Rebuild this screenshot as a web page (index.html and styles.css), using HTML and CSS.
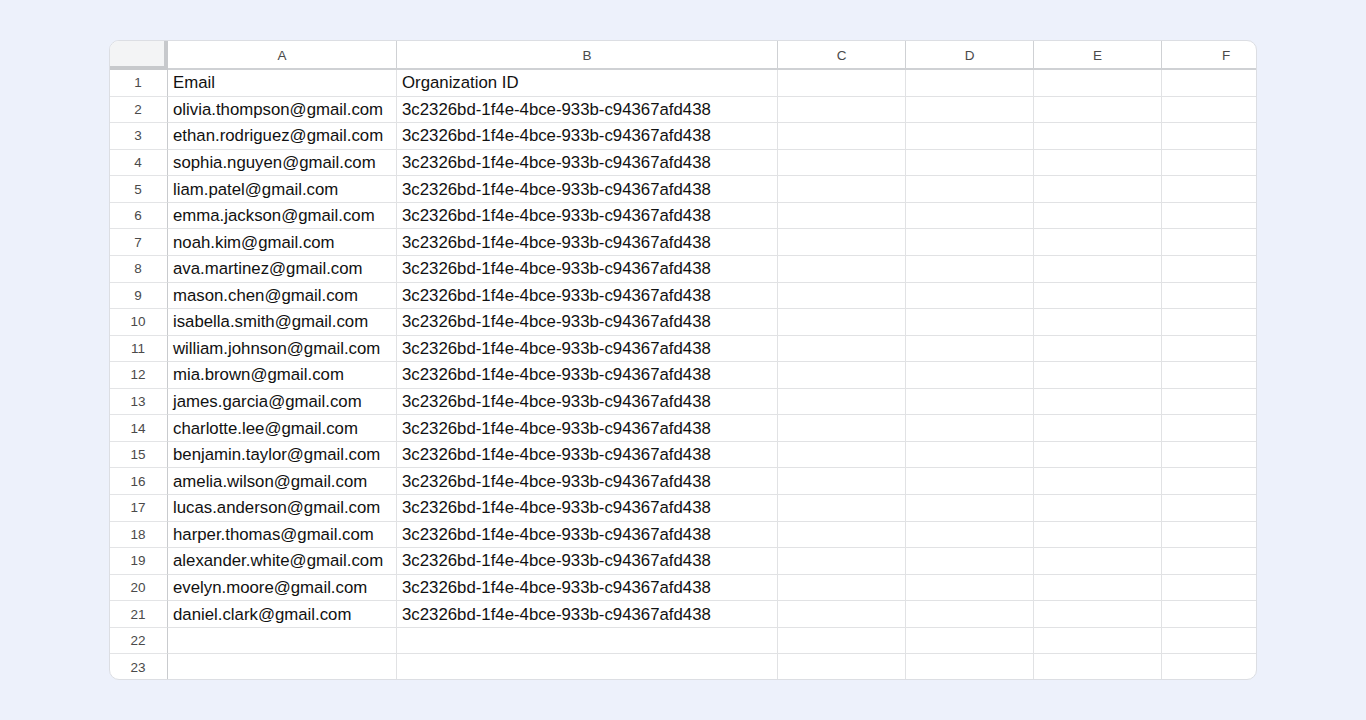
FILE: index.html
```html
<!DOCTYPE html>
<html lang="en">
<head>
<meta charset="utf-8">
<title>Sheet</title>
<link rel="stylesheet" href="styles.css">
</head>
<body>
<div class="page">
  <div class="sheet">
    <div class="corner"></div>
    <div class="ch">A</div><div class="ch">B</div><div class="ch">C</div><div class="ch">D</div><div class="ch">E</div><div class="ch last">F</div>

    <div class="rn">1</div><div class="c">Email</div><div class="c">Organization ID</div><div class="c"></div><div class="c"></div><div class="c"></div><div class="c last"></div>
    <div class="rn">2</div><div class="c">olivia.thompson@gmail.com</div><div class="c">3c2326bd-1f4e-4bce-933b-c94367afd438</div><div class="c"></div><div class="c"></div><div class="c"></div><div class="c last"></div>
    <div class="rn">3</div><div class="c">ethan.rodriguez@gmail.com</div><div class="c">3c2326bd-1f4e-4bce-933b-c94367afd438</div><div class="c"></div><div class="c"></div><div class="c"></div><div class="c last"></div>
    <div class="rn">4</div><div class="c">sophia.nguyen@gmail.com</div><div class="c">3c2326bd-1f4e-4bce-933b-c94367afd438</div><div class="c"></div><div class="c"></div><div class="c"></div><div class="c last"></div>
    <div class="rn">5</div><div class="c">liam.patel@gmail.com</div><div class="c">3c2326bd-1f4e-4bce-933b-c94367afd438</div><div class="c"></div><div class="c"></div><div class="c"></div><div class="c last"></div>
    <div class="rn">6</div><div class="c">emma.jackson@gmail.com</div><div class="c">3c2326bd-1f4e-4bce-933b-c94367afd438</div><div class="c"></div><div class="c"></div><div class="c"></div><div class="c last"></div>
    <div class="rn">7</div><div class="c">noah.kim@gmail.com</div><div class="c">3c2326bd-1f4e-4bce-933b-c94367afd438</div><div class="c"></div><div class="c"></div><div class="c"></div><div class="c last"></div>
    <div class="rn">8</div><div class="c">ava.martinez@gmail.com</div><div class="c">3c2326bd-1f4e-4bce-933b-c94367afd438</div><div class="c"></div><div class="c"></div><div class="c"></div><div class="c last"></div>
    <div class="rn">9</div><div class="c">mason.chen@gmail.com</div><div class="c">3c2326bd-1f4e-4bce-933b-c94367afd438</div><div class="c"></div><div class="c"></div><div class="c"></div><div class="c last"></div>
    <div class="rn">10</div><div class="c">isabella.smith@gmail.com</div><div class="c">3c2326bd-1f4e-4bce-933b-c94367afd438</div><div class="c"></div><div class="c"></div><div class="c"></div><div class="c last"></div>
    <div class="rn">11</div><div class="c">william.johnson@gmail.com</div><div class="c">3c2326bd-1f4e-4bce-933b-c94367afd438</div><div class="c"></div><div class="c"></div><div class="c"></div><div class="c last"></div>
    <div class="rn">12</div><div class="c">mia.brown@gmail.com</div><div class="c">3c2326bd-1f4e-4bce-933b-c94367afd438</div><div class="c"></div><div class="c"></div><div class="c"></div><div class="c last"></div>
    <div class="rn">13</div><div class="c">james.garcia@gmail.com</div><div class="c">3c2326bd-1f4e-4bce-933b-c94367afd438</div><div class="c"></div><div class="c"></div><div class="c"></div><div class="c last"></div>
    <div class="rn">14</div><div class="c">charlotte.lee@gmail.com</div><div class="c">3c2326bd-1f4e-4bce-933b-c94367afd438</div><div class="c"></div><div class="c"></div><div class="c"></div><div class="c last"></div>
    <div class="rn">15</div><div class="c">benjamin.taylor@gmail.com</div><div class="c">3c2326bd-1f4e-4bce-933b-c94367afd438</div><div class="c"></div><div class="c"></div><div class="c"></div><div class="c last"></div>
    <div class="rn">16</div><div class="c">amelia.wilson@gmail.com</div><div class="c">3c2326bd-1f4e-4bce-933b-c94367afd438</div><div class="c"></div><div class="c"></div><div class="c"></div><div class="c last"></div>
    <div class="rn">17</div><div class="c">lucas.anderson@gmail.com</div><div class="c">3c2326bd-1f4e-4bce-933b-c94367afd438</div><div class="c"></div><div class="c"></div><div class="c"></div><div class="c last"></div>
    <div class="rn">18</div><div class="c">harper.thomas@gmail.com</div><div class="c">3c2326bd-1f4e-4bce-933b-c94367afd438</div><div class="c"></div><div class="c"></div><div class="c"></div><div class="c last"></div>
    <div class="rn">19</div><div class="c">alexander.white@gmail.com</div><div class="c">3c2326bd-1f4e-4bce-933b-c94367afd438</div><div class="c"></div><div class="c"></div><div class="c"></div><div class="c last"></div>
    <div class="rn">20</div><div class="c">evelyn.moore@gmail.com</div><div class="c">3c2326bd-1f4e-4bce-933b-c94367afd438</div><div class="c"></div><div class="c"></div><div class="c"></div><div class="c last"></div>
    <div class="rn">21</div><div class="c">daniel.clark@gmail.com</div><div class="c">3c2326bd-1f4e-4bce-933b-c94367afd438</div><div class="c"></div><div class="c"></div><div class="c"></div><div class="c last"></div>
    <div class="rn">22</div><div class="c"></div><div class="c"></div><div class="c"></div><div class="c"></div><div class="c"></div><div class="c last"></div>
    <div class="rn end">23</div><div class="c end"></div><div class="c end"></div><div class="c end"></div><div class="c end"></div><div class="c end"></div><div class="c last end"></div>
  </div>
</div>
</body>
</html>
```

FILE: styles.css
```css
* { box-sizing: border-box; }
html, body {
  margin: 0;
  padding: 0;
  background: #edf1fb;
}
.page {
  width: 1366px;
  height: 720px;
  padding: 40px 0 0 109px;
}
.sheet {
  width: 1148px;
  height: 640px;
  display: grid;
  grid-template-columns: 58px 229px 381px 128px 128px 128px 128px;
  grid-template-rows: 29px repeat(23, 26.57px);
  align-content: start;
  background: #ffffff;
  border: 1px solid #dcdee3;
  border-radius: 10px;
  overflow: hidden;
  font-family: "Liberation Sans", Arial, Helvetica, sans-serif;
}
.corner {
  background: #f3f4f5;
  border-right: 4px solid #c7c9cc;
  border-bottom: 4px solid #c7c9cc;
}
.ch {
  display: flex;
  align-items: center;
  justify-content: center;
  font-size: 13.5px;
  color: #4a4a4a;
  border-right: 1px solid #cfd1d4;
  border-bottom: 2px solid #cfd1d4;
  padding-top: 1px;
}
.rn {
  display: flex;
  align-items: center;
  justify-content: center;
  font-size: 13.5px;
  color: #4a4a4a;
  border-right: 1px solid #c9cbce;
  border-bottom: 1px solid #e3e4e6;
  padding-right: 1px;
}
.c {
  display: flex;
  align-items: center;
  padding: 1px 0 0 5px;
  font-size: 16.8px;
  color: #111111;
  white-space: nowrap;
  overflow: hidden;
  border-right: 1px solid #e1e2e4;
  border-bottom: 1px solid #e1e2e4;
}
.last { border-right: none; }
.end { border-bottom: none; }
```
